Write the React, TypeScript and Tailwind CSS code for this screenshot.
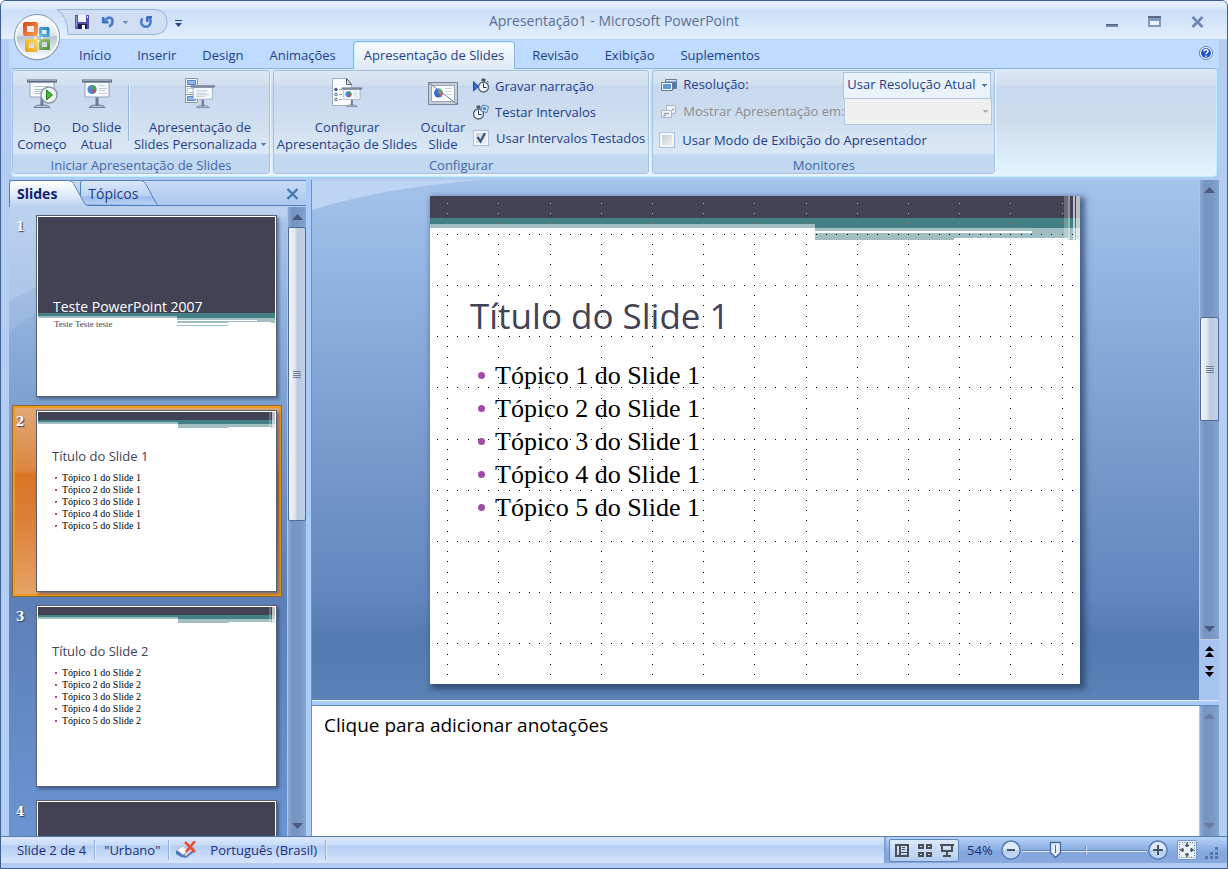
import { useState, type ReactNode } from "react";

const RIBBON_TABS = ["Início", "Inserir", "Design", "Animações", "Apresentação de Slides", "Revisão", "Exibição", "Suplementos"];

const UI_FONT = "font-['Open_Sans','Noto_Sans',sans-serif]";
const TITLE_FONT = "font-['Open_Sans','Noto_Sans',sans-serif]";
const BODY_FONT = "font-['Liberation_Serif',serif]";

type Slide = { title: string; topics: string[]; cover?: boolean };

function topicsFor(slide: number) {
  return [1, 2, 3, 4, 5].map((n) => `Tópico ${n} do Slide ${slide}`);
}

const SLIDES: Slide[] = [
  { title: "Teste PowerPoint 2007", topics: ["Teste Teste teste"], cover: true },
  { title: "Título do Slide 1", topics: topicsFor(1) },
  { title: "Título do Slide 2", topics: topicsFor(2) },
  { title: "", topics: [], cover: true },
];

/* ---------- icons ---------- */

function OfficeLogo() {
  return (
    <svg viewBox="0 0 48 48" className="size-12">
      <defs>
        <linearGradient id="orb" x1="0" y1="0" x2="0" y2="1">
          <stop offset="0" stopColor="#fdfeff" />
          <stop offset="0.45" stopColor="#dfe5ee" />
          <stop offset="0.5" stopColor="#b9c5d6" />
          <stop offset="1" stopColor="#f8fbff" />
        </linearGradient>
        <linearGradient id="red" gradientUnits="userSpaceOnUse" x1="10" y1="9" x2="25" y2="23">
          <stop offset="0" stopColor="#d8401c" />
          <stop offset="1" stopColor="#f6a850" />
        </linearGradient>
        <linearGradient id="blue" gradientUnits="userSpaceOnUse" x1="26" y1="24" x2="36" y2="14">
          <stop offset="0" stopColor="#6cc4ee" />
          <stop offset="1" stopColor="#1f7fc4" />
        </linearGradient>
        <linearGradient id="yellow" gradientUnits="userSpaceOnUse" x1="12" y1="39" x2="25" y2="26">
          <stop offset="0" stopColor="#ee9a10" />
          <stop offset="1" stopColor="#fbe060" />
        </linearGradient>
        <linearGradient id="green" gradientUnits="userSpaceOnUse" x1="25" y1="26" x2="37" y2="38">
          <stop offset="0" stopColor="#a9d472" />
          <stop offset="1" stopColor="#3f8a2c" />
        </linearGradient>
      </defs>
      <circle cx="24" cy="24.5" r="23" fill="#7f93b3" opacity="0.7" />
      <circle cx="24" cy="24" r="22.5" fill="#fff" stroke="#8c98ac" />
      <circle cx="24" cy="24" r="20.5" fill="url(#orb)" />
      <g fill="none" strokeLinejoin="round">
        <rect x="12" y="11" width="11" height="10" stroke="url(#red)" strokeWidth="4" />
        <rect x="27.500" y="15.500" width="7.500" height="7" stroke="url(#blue)" strokeWidth="3" />
        <rect x="14" y="28" width="9" height="9" stroke="url(#yellow)" strokeWidth="4" />
        <rect x="27.500" y="27.500" width="8" height="8" stroke="url(#green)" strokeWidth="3" />
        <path d="M25.500 21v2M25.500 27v2M21.500 25h2M28 25h2" stroke="#fff" strokeWidth="1.500" />
      </g>
    </svg>
  );
}

function SaveIcon() {
  return (
    <svg viewBox="0 0 14 14" className="size-3.5">
      <path d="M0 0h14v14H1l-1-1z" fill="#5350b0" />
      <path d="M3 0h8v7H3z" fill="#eef2ff" />
      <path d="M1 1h1v11H1z" fill="#9a98e0" />
      <path d="M12 1h1v2h-1z" fill="#fff" />
      <path d="M3 9h9v5H3z" fill="#1d1d50" />
      <path d="M7 10h3v4H7z" fill="#fff" />
    </svg>
  );
}

function UndoIcon() {
  return (
    <svg viewBox="0 0 14 14" className="size-3.5" fill="none">
      <path d="M1.500 7.200h6M2.200 8V2" stroke="#3d6fc4" strokeWidth="2.600" />
      <path d="M3 6.500L6 3.500C9 1.500 12 3.500 11.500 7c-.2 2-1.500 3.500-3.500 4.500" stroke="#4a7ccc" strokeWidth="2.600" />
    </svg>
  );
}

function RepeatIcon() {
  return (
    <svg viewBox="0 0 14 14" className="size-3.5" fill="none">
      <path d="M3.500 3.500C1.500 6 2 9 4 10.700c2.200 1.700 5.200 1.200 6.700-1C12 7.500 12 5 10 3" stroke="#4a7ccc" strokeWidth="2.600" />
      <path d="M8 2.200h5M8.200 1.500V7" stroke="#3d6fc4" strokeWidth="2.400" />
    </svg>
  );
}

function HelpIcon() {
  return (
    <svg viewBox="0 0 14 14" className="size-3.5" fill="none">
      <circle cx="7" cy="7" r="6.500" fill="#fff" stroke="#5c7cae" />
      <circle cx="7" cy="7" r="5" fill="#1f56d0" />
      <path d="M5 5.500C5 3 9 3 9 5.300c0 1.500-2 1.400-2 3M7 9.500V11" stroke="#fff" strokeWidth="1.500" />
    </svg>
  );
}

function Caret({ className = "" }: { className?: string }) {
  return (
    <svg viewBox="0 0 5 3" className={`h-[3px] w-[5px] shrink-0 ${className}`} shapeRendering="crispEdges">
      <path d="M0 0h5v1H4v1H3v1H2V2H1V1H0z" fill="currentColor" />
    </svg>
  );
}

function Screen({ chart }: { chart?: boolean }) {
  return (
    <g>
      <path d="M8 29.500c1-2 4-2.500 8-2.500s7 .5 8 2.500z" fill="#b9c8d8" stroke="#6e8194" />
      <path d="M14.500 19h3v9h-3z" fill="#6d7e92" />
      <path d="M4 4h24v15H4z" fill="#f7fafd" stroke="#94a3b5" />
      <path d="M1 1.500h30v3H1z" fill="#5d6d82" />
      <path d="M2 2h28v1H2z" fill="#9aa8ba" />
      {chart ? (
        <g>
          <circle cx="11" cy="11.500" r="4.500" fill="#4a86dc" />
          <path d="M11 11.500V7a4.500 4.500 0 0 1 4.400 5z" fill="#45a548" />
          <path d="M11 11.500l4.400.5a4.500 4.500 0 0 1-3 3.700z" fill="#d8473a" />
          <path d="M18 7.500h6M18 10.500h8M18 12.500h6M18 15.500h8" stroke="#c2cbd6" />
        </g>
      ) : (
        <path d="M8 8.500h14M8 11.500h12M8 13.500h16M8 15.500h10" stroke="#b6c1ce" />
      )}
    </g>
  );
}

function FromStartIcon() {
  return (
    <svg viewBox="0 0 32 32" className="size-8">
      <Screen />
      <circle cx="23" cy="17" r="8" fill="#eef3f6" stroke="#8b98a6" strokeWidth="1.400" />
      <path d="M20.500 12l6 5-6 5z" fill="#4cb63c" stroke="#1f7a1a" />
    </svg>
  );
}

function FromCurrentIcon() {
  return (
    <svg viewBox="0 0 32 32" className="size-8">
      <Screen chart />
    </svg>
  );
}

function CustomShowIcon() {
  return (
    <svg viewBox="0 0 32 32" className="size-8">
      <path d="M1.500.5h12v24h-12z" fill="#f3f6fa" stroke="#8796aa" />
      <path d="M1 8.500h13M1 16.500h13" stroke="#8796aa" />
      <path d="M3.500 2.500h8v4h-8zM3.500 18.500h8v4h-8z" fill="#8fb5ea" stroke="#5585c8" />
      <path d="M3.500 10.500h8v4h-8z" fill="#fff" stroke="#c3ccd8" />
      <g transform="translate(6 6) scale(0.8)">
        <Screen />
      </g>
    </svg>
  );
}

function SetupIcon() {
  return (
    <svg viewBox="0 0 32 32" className="size-8">
      <path d="M1.500.5h14l5 6v21h-19z" fill="#fbfcfe" stroke="#a3b0c2" />
      <path d="M15.500.5v6h5z" fill="#dde5ee" stroke="#4d5a6b" />
      <path d="M8 11.500h3M8 16.500h3M8 21.500h3" stroke="#9aa5b2" />
      <g fill="#fff" stroke="#56647a">
        <circle cx="5" cy="11.500" r="1.300" fill="#3b4960" />
        <circle cx="5" cy="16.500" r="1.300" />
        <circle cx="5" cy="21.500" r="1.300" />
      </g>
      <g transform="translate(10 8.500) scale(0.68)">
        <Screen chart />
      </g>
    </svg>
  );
}

function HideSlideIcon() {
  return (
    <svg viewBox="0 0 32 32" className="size-8">
      <path d="M1.500 4.500h29v22h-29z" fill="#c5cdd8" stroke="#77879b" />
      <path d="M4.500 7.500h23v16h-23z" fill="#fbfcfe" stroke="#98a5b5" />
      <circle cx="11.500" cy="15" r="4.500" fill="#356fcf" />
      <path d="M11.500 15v-4.500a4.500 4.500 0 0 1 4.500 4.500z" fill="#78b878" />
      <path d="M11.500 15h4.500l-2 4z" fill="#d8604a" />
      <path d="M18 10.500h7M18 13.500h7M20 16.500h5" stroke="#ccd4de" />
      <path d="M2 5l28 21" stroke="#6f8095" />
    </svg>
  );
}

function Stopwatch() {
  return (
    <g>
      <path d="M9 1h3v2H9zM14 3l1.500 1.500" fill="#4c5a6e" stroke="#4c5a6e" />
      <circle cx="10.500" cy="9" r="5" fill="#f4f8fc" stroke="#55647a" strokeWidth="1.400" />
      <path d="M10.500 5.500V9.500h3" fill="none" stroke="#1f2c40" />
    </g>
  );
}

function RecordIcon() {
  return (
    <svg viewBox="0 0 16 16" className="size-4">
      <path d="M.5 3.500L5.500 8.500l-5 4.500z" fill="#2f6fd8" stroke="#1c4ea8" />
      <Stopwatch />
    </svg>
  );
}

function RehearseIcon() {
  return (
    <svg viewBox="0 0 16 16" className="size-4">
      <g transform="translate(-5 1)">
        <Stopwatch />
      </g>
      <path d="M9.500 1l6 1.500-1.500 6L8 7z" fill="#eaf3fd" stroke="#4d78b4" />
      <circle cx="11.500" cy="4.800" r="1.800" fill="#2d8fe0" />
    </svg>
  );
}

function MonitorsIcon() {
  return (
    <svg viewBox="0 0 16 16" className="size-4" fill="none">
      <path d="M4.500 2.500h11v9h-11z" fill="#4b78b4" stroke="#697d97" />
      <path d="M5 3h10v1.500H5z" fill="#dbe6f2" />
      <path d="M.5 5.500h11v8H.5z" fill="#fff" stroke="#697d97" />
      <path d="M2 7h8v5H2z" fill="#5a9be0" />
    </svg>
  );
}

function ShowOnIcon() {
  return (
    <svg viewBox="0 0 16 16" className="size-4" fill="none" stroke="#a8b5c6">
      <path d="M5.500 1.500h9v8h-9z" fill="#eef2f7" />
      <path d="M.5 6.500h10v7H.5z" fill="#f4f6fa" />
      <path d="M3 9.500h5M2 11.500h3M11 5.500h2" stroke="#94a2b6" strokeWidth="1.500" />
    </svg>
  );
}

function SpellIcon() {
  return (
    <svg viewBox="0 0 20 18" className="h-[18px] w-5">
      <path d="M0 10l7-4 5 5 6-4v4l-8 6-5-1-5-3z" fill="#4b78c8" />
      <path d="M1 9l6-4 5 5-5 4z" fill="#fbfcfe" stroke="#a6b0bf" strokeWidth="0.700" />
      <path d="M12 10l5-4 1 2-8 7-2-1z" fill="#e6ebf3" stroke="#8894a8" strokeWidth="0.700" />
      <path d="M9 1l10 10M19 0l-9 11" stroke="#f04a2c" strokeWidth="2.600" />
    </svg>
  );
}

/* ---------- ribbon ---------- */

function RibbonGroup({ label, children }: { label: string; children: ReactNode }) {
  return (
    <section
      aria-label={label}
      className="flex flex-col overflow-hidden rounded-[3px] border border-[#a4c1e0] bg-[linear-gradient(#dde8f5_0px,#d1deed_14px,#c8d8ef_15px,#cfdeef_50px,#dbe8f6_84px)] shadow-[1px_1px_0_#f0f7ff]"
    >
      <div className="flex flex-1">{children}</div>
      <div className="h-[19px] bg-[#c1d8f0] text-center leading-[22px] text-[#4368a8]">{label}</div>
    </section>
  );
}

function BigButton({ icon, lines, menu, className }: { icon: ReactNode; lines: [string, string]; menu?: boolean; className: string }) {
  return (
    <button type="button" className={`flex flex-col items-center pt-[7px] leading-[17px] whitespace-nowrap ${className}`}>
      {icon}
      <span className="mt-[9px]">{lines[0]}</span>
      <span className="flex items-center gap-1">
        {lines[1]}
        {menu && <Caret className="text-[#5b84bd]" />}
      </span>
    </button>
  );
}

function CheckRow({ label, checked, onChange }: { label: string; checked: boolean; onChange: (v: boolean) => void }) {
  return (
    <label className="flex items-center gap-[7px] whitespace-nowrap">
      <span className="relative size-4">
        <input
          type="checkbox"
          checked={checked}
          onChange={(e) => onChange(e.target.checked)}
          className="block size-4 appearance-none border border-[#abc1de] bg-[linear-gradient(135deg,#c0c6cf,#f8f8f8)] shadow-[inset_0_0_0_2px_#f4f6fa]"
        />
        {checked && (
          <svg viewBox="0 0 16 16" className="pointer-events-none absolute inset-0 size-4" fill="none">
            <path d="M4.500 7l3 4.500L12 3" stroke="#34557f" strokeWidth="2.200" />
          </svg>
        )}
      </span>
      {label}
    </label>
  );
}

function Ribbon() {
  const [timings, setTimings] = useState(true);
  const [presenter, setPresenter] = useState(false);

  return (
    <div className="mx-[2px] flex h-[109px] gap-[3px] rounded-[4px] border border-t-[#8db2e3] border-r-[#b9f2fb] border-b-[#b9f2fb] border-l-[#b9e2f6] bg-[linear-gradient(#dde8f5_0px,#d1deed_16px,#c8d8ef_17px,#cddcec_50px,#e4f4ff_108px)] pt-px pb-[2px]">
      <RibbonGroup label="Iniciar Apresentação de Slides">
        <BigButton icon={<FromStartIcon />} lines={["Do", "Começo"]} className="w-[58px]" />
        <BigButton icon={<FromCurrentIcon />} lines={["Do Slide", "Atual"]} className="w-[51px]" />
        <div className="mt-3.5 mr-0.5 ml-1.5 h-[56px] w-px bg-[#93b4de] shadow-[1px_0_0_#edf4fc]" />
        <BigButton icon={<CustomShowIcon />} lines={["Apresentação de", "Slides Personalizada"]} menu className="w-[138px]" />
      </RibbonGroup>

      <RibbonGroup label="Configurar">
        <BigButton icon={<SetupIcon />} lines={["Configurar", "Apresentação de Slides"]} className="w-[146px]" />
        <BigButton icon={<HideSlideIcon />} lines={["Ocultar", "Slide"]} className="w-[46px]" />
        <div className="flex flex-col gap-2 pt-1.5 pr-[3px] pl-[7px] leading-[18px]">
          <button type="button" className="flex items-center gap-1.5 whitespace-nowrap">
            <RecordIcon />
            Gravar narração
          </button>
          <button type="button" className="flex items-center gap-1.5 whitespace-nowrap">
            <RehearseIcon />
            Testar Intervalos
          </button>
          <CheckRow label="Usar Intervalos Testados" checked={timings} onChange={setTimings} />
        </div>
      </RibbonGroup>

      <RibbonGroup label="Monitores">
        <div className="w-[341px] pr-[3px] pl-1.5">
          <div className="flex h-[27px] items-center pt-px">
            <label htmlFor="resolution" className="flex flex-1 items-center gap-1.5 pl-0.5">
              <MonitorsIcon />
              Resolução:
            </label>
            <span className="relative">
              <select
                id="resolution"
                className="block h-[27px] w-[148px] appearance-none border border-[#a9c3e3] bg-[#eaf2fb] px-[3px] outline-none"
              >
                <option>Usar Resolução Atual</option>
              </select>
              <Caret className="pointer-events-none absolute top-3 right-1 text-[#4a78b8]" />
            </span>
          </div>
          <div className="flex h-[27px] items-center text-[#8d8d8d]">
            <label htmlFor="show-on" className="flex flex-1 items-center gap-1.5 pl-0.5 whitespace-nowrap">
              <ShowOnIcon />
              Mostrar Apresentação em:
            </label>
            <span className="relative">
              <select id="show-on" disabled className="block h-[27px] w-[148px] appearance-none border border-[#b3c7e1] bg-[#efefef]" />
              <Caret className="pointer-events-none absolute top-3 right-1 text-[#b0b0b0]" />
            </span>
          </div>
          <div className="pt-1.5 leading-[18px]">
            <CheckRow label="Usar Modo de Exibição do Apresentador" checked={presenter} onChange={setPresenter} />
          </div>
        </div>
      </RibbonGroup>
    </div>
  );
}

/* ---------- slides ---------- */

function UrbanBand() {
  return (
    <svg viewBox="0 0 650 44" className="block w-full" shapeRendering="crispEdges" aria-hidden="true">
      <path d="M0 0h650v22H0z" fill="#424255" />
      <path d="M0 22h650v10H0z" fill="#438086" />
      <path d="M0 28h385v4H0z" fill="#a1bfc2" />
      <path d="M385 32h265v12H385z" fill="#a1bfc2" />
      <path d="M385 35h217v2H385zM524 42h114v2H524z" fill="#fff" />
      <path d="M634 0h4v44h-4z" fill="#fff" opacity="0.220" />
      <path d="M638 0h2v44h-2z" fill="#fff" opacity="0.450" />
      <path d="M643 0h2v44h-2zM646 0h4v44h-4z" fill="#fff" opacity="0.650" />
    </svg>
  );
}

function CoverBand() {
  return (
    <svg viewBox="0 0 238 14" className="block w-full" shapeRendering="crispEdges" aria-hidden="true">
      <path d="M0 0h238v5H0z" fill="#438086" />
      <path d="M0 3h140v2H0zM140 5h98v4h-98zM234 9h4v1h-4zM140 9h51v1h-51zM140 12h51v1h-51z" fill="#a1bfc2" />
      <path d="M140 7h80v1h-80z" fill="#fff" />
    </svg>
  );
}

const STEP = 10.24;

function gridDots() {
  const dots: { x: number; y: number }[] = [];
  for (let col = 0; col < 63; col++) {
    for (let row = 0; row < 47; row++) {
      if (col % 5 === 1 || row % 5 === 3) {
        dots.push({ x: Math.round(7 + col * STEP), y: Math.round(7 + row * STEP) });
      }
    }
  }
  return dots;
}

function dotPath(dots: { x: number; y: number }[]) {
  return dots.map((d) => `M${d.x} ${d.y}h1v1h-1z`).join("");
}

function Grid() {
  const dots = gridDots();
  return (
    <svg viewBox="0 0 650 488" className="pointer-events-none absolute inset-0 size-full" shapeRendering="crispEdges" aria-hidden="true">
      <path d={dotPath(dots.filter((d) => d.y < 22))} fill="#bdbdaa" />
      <path d={dotPath(dots.filter((d) => d.y >= 22 && d.y < 32))} fill="#b87a62" />
      <path d={dotPath(dots.filter((d) => d.y >= 32))} fill="#000" />
    </svg>
  );
}

function Thumbnail({ slide, number, selected }: { slide: Slide; number: number; selected: boolean }) {
  return (
    <li
      className={`flex h-[192px] w-[270px] shrink-0 border ${
        selected
          ? "border-[#8a6a3c] bg-[linear-gradient(#e0a878,#dc8640_34%,#d97424_36%,#dc8038_60%,#e6a468)] shadow-[inset_0_0_0_2px_#ee9a1c]"
          : "border-transparent"
      }`}
    >
      <span className="w-[23px] pt-2 pl-[3px] font-['DejaVu_Serif',serif] text-xs leading-4 font-bold text-white [text-shadow:1px_1px_1px_#33415c]">
        {number}
      </span>
      <button
        type="button"
        aria-label={`Slide ${number}`}
        className="mt-1 flex h-[182px] w-[241px] flex-col border border-[#5a6070] bg-white p-px text-left shadow-[2px_2px_3px_rgba(20,40,80,0.5)]"
      >
        {slide.cover ? (
          <span className="block w-full">
            <span className={`flex h-24 w-full items-end bg-[#424255] pl-[15px] text-[14px] leading-3 whitespace-nowrap text-white ${TITLE_FONT}`}>
              {slide.title}
            </span>
            <CoverBand />
            <span className={`-mt-2 block pl-4 text-[9px] leading-[11px] text-[#424255] ${BODY_FONT}`}>{slide.topics[0]}</span>
          </span>
        ) : (
          <span className="block w-full">
            <UrbanBand />
            <span className={`mt-5 block pl-3.5 text-[13px] leading-4 text-[#424255] ${TITLE_FONT}`}>{slide.title}</span>
            <span className={`mt-2 block pl-[17px] text-[10px] text-black ${BODY_FONT}`}>
              {slide.topics.map((topic) => (
                <span key={topic} className="flex items-center gap-[5px] leading-3">
                  <span className="size-0.5 bg-[#a04da3]" />
                  {topic}
                </span>
              ))}
            </span>
          </span>
        )}
      </button>
    </li>
  );
}

/* ---------- scrollbars ---------- */

function ScrollArrow({ down, faded }: { down?: boolean; faded?: boolean }) {
  return (
    <button type="button" aria-label={down ? "Rolar para baixo" : "Rolar para cima"} className="flex h-5 w-full shrink-0 items-center justify-center">
      <svg viewBox="0 0 11 6" className={`h-1.5 w-[11px] ${down ? "rotate-180" : ""}`}>
        <path d="M5.500 0L11 6H0z" fill={faded ? "#6d7ba0" : "#4d5880"} />
      </svg>
    </button>
  );
}

function ScrollThumb({ className }: { className: string }) {
  return (
    <div className={`flex w-full flex-col items-center justify-center gap-px rounded-[2px] border border-[#54699a] bg-[linear-gradient(90deg,#f2f5f9,#e2e7ee_35%,#b9c8de_55%,#c6d3e5)] ${className}`}>
      <i className="h-px w-2 bg-[#6f7f98]" />
      <i className="h-px w-2 bg-[#6f7f98]" />
      <i className="h-px w-2 bg-[#6f7f98]" />
      <i className="h-px w-2 bg-[#6f7f98]" />
    </div>
  );
}

const TRACK = "flex flex-col border-l border-[#a9c6ee] bg-[linear-gradient(90deg,#8fa9cf,#7394c2_25%,#7a99c6_70%,#86a4cf)]";

/* ---------- panes ---------- */

function SlidesPane() {
  return (
    <aside className="flex w-[297px] shrink-0 flex-col">
      <div className="relative flex h-[27px] shrink-0 items-center bg-[linear-gradient(#c9dcf6,#a9c6ee)] text-[14px]">
        <svg viewBox="0 0 297 27" className="absolute inset-0 h-[27px] w-[297px]" aria-hidden="true">
          <defs>
            <linearGradient id="tabOn" x1="0" y1="0" x2="0" y2="1">
              <stop offset="0" stopColor="#fff" />
              <stop offset="0.550" stopColor="#e0ebfa" />
              <stop offset="1" stopColor="#b9d0f1" />
            </linearGradient>
            <linearGradient id="tabOff" x1="0" y1="0" x2="0" y2="1">
              <stop offset="0" stopColor="#dbe8fa" />
              <stop offset="0.600" stopColor="#bcd3f3" />
              <stop offset="0.650" stopColor="#9dbdee" />
              <stop offset="1" stopColor="#b9d3f6" />
            </linearGradient>
          </defs>
          <path d="M0 .5h297" stroke="#5f8fc8" />
          <path d="M71.500 25V3q0-2.500 3-2.500h57q3 0 5 3l12 22z" fill="url(#tabOff)" stroke="#5080b8" />
          <path d="M.5 27V3q0-2.500 3-2.500h56q3 0 5 3l10 18q2 4 4 4H297V27z" fill="url(#tabOn)" />
          <path d="M.5 27V3q0-2.500 3-2.500h56q3 0 5 3l10 18q2 4 4 4H297" fill="none" stroke="#5080b8" />
          <path d="M79 26.500h218" stroke="#b5cdf0" />
        </svg>
        <button type="button" className="relative pl-2 font-bold text-[#0c1e72]">
          Slides
        </button>
        <button type="button" className="relative ml-[31px] text-[#1c3c84]">
          Tópicos
        </button>
        <button type="button" aria-label="Fechar" className="relative mr-[7px] ml-auto">
          <svg viewBox="0 0 13 12" className="h-3 w-[13px]">
            <path d="M1.500 1l10 10M11.500 1l-10 10" stroke="#4678b4" strokeWidth="2.400" />
          </svg>
        </button>
      </div>
      <div className="flex min-h-0 flex-1 bg-[linear-gradient(#a9c5ec,#94b4e0_15%,#7c9fd0_32%,#6c92c6_45%,#5c7fb5_62%,#6a94d2)]">
        <div className="relative flex min-w-0 flex-1 overflow-hidden">
          <svg viewBox="0 0 278 160" className="absolute top-0 left-0 h-40 w-[278px]" aria-hidden="true">
            <path d="M0 0h278v10Q120 30 0 94z" fill="#fff" opacity="0.150" />
            <path d="M0 0h278v14Q110 40 0 126z" fill="#fff" opacity="0.100" />
          </svg>
          <ol className="relative flex min-w-0 flex-1 flex-col gap-[3px] pt-[3px] pl-[3px]">
            {SLIDES.map((slide, index) => (
              <Thumbnail key={index} slide={slide} number={index + 1} selected={index === 1} />
            ))}
          </ol>
        </div>
        <div className={`w-[19px] ${TRACK}`}>
          <ScrollArrow />
          <ScrollThumb className="h-[294px]" />
          <div className="flex-1" />
          <ScrollArrow down />
        </div>
      </div>
    </aside>
  );
}

function Editor() {
  const slide = SLIDES[1];
  return (
    <div className="flex min-h-0 flex-1">
      <div className="relative flex min-w-0 flex-1 items-center justify-center overflow-hidden bg-[linear-gradient(#a3c3ec,#8eafdd_25%,#7698ca_55%,#6286bd_80%,#547bb0_88%,#5a82b6)] pr-px">
        <svg viewBox="0 0 168 30" className="absolute top-0 left-0 h-[30px] w-[168px]" aria-hidden="true">
          <path d="M0 0h168Q70 8 0 30z" fill="#bdd4f2" />
        </svg>
        <article className="relative h-[488px] w-[650px] bg-white shadow-[3px_3px_6px_2px_rgba(30,50,85,0.65)]">
          <UrbanBand />
          <h1 className={`mt-[51px] ml-10 text-[35px] leading-[50px] font-medium text-[#424255] ${TITLE_FONT}`}>{slide.title}</h1>
          <ul className={`mt-[18px] ml-12 text-[26px] text-black ${BODY_FONT}`}>
            {slide.topics.map((topic) => (
              <li key={topic} className="flex items-center leading-[33px]">
                <span className="mr-2.5 size-[7px] rounded-full bg-[#a04da3]" />
                {topic}
              </li>
            ))}
          </ul>
          <Grid />
        </article>
      </div>
      <div className="flex w-5 flex-col bg-[#a6c4ef]">
        <div className={`flex-1 border-b border-b-[#c8ccd4] ${TRACK}`}>
          <ScrollArrow />
          <div className="flex-[118]" />
          <ScrollThumb className="h-[104px]" />
          <div className="flex-[199]" />
          <ScrollArrow down />
        </div>
        <div className="flex h-[60px] flex-col items-center gap-2 pt-[6px]">
          <button type="button" aria-label="Slide anterior" className="flex">
            <svg viewBox="0 0 9 12" className="h-3 w-[9px]">
              <path d="M4.500 0L9 5H0zM4.500 6L9 11H0z" />
            </svg>
          </button>
          <button type="button" aria-label="Próximo slide" className="flex">
            <svg viewBox="0 0 9 12" className="h-3 w-[9px]">
              <path d="M4.500 5L9 0H0zM4.500 11L9 6H0z" />
            </svg>
          </button>
        </div>
      </div>
    </div>
  );
}

function Notes() {
  return (
    <div className="flex h-[130px] shrink-0">
      <textarea
        aria-label="Anotações"
        placeholder="Clique para adicionar anotações"
        className="min-w-0 flex-1 resize-none bg-white px-3 pt-1.5 text-[19px] leading-[26px] text-black outline-none placeholder:text-black placeholder:opacity-100"
      />
      <div className={`w-5 ${TRACK}`}>
        <ScrollArrow faded />
        <div className="flex-1" />
        <ScrollArrow down faded />
      </div>
    </div>
  );
}

/* ---------- window frame ---------- */

function TitleBar() {
  return (
    <header className="relative flex h-[39px] shrink-0 items-center border-b border-[#b3d1f3] bg-[linear-gradient(#e6effc_0px,#dbe8fa_8px,#cadef8_9px,#e4effd_38px)]">
      <div className="relative mt-1 ml-[56px] flex h-[26px] w-[111px] items-center pl-[18px]">
        <svg viewBox="0 0 111 26" className="absolute inset-0 h-[26px] w-[111px]" aria-hidden="true">
          <path d="M0 .5h98q12 1 12 12.500t-12 12.500H11Q11 8 0 .5z" fill="#cfdef2" stroke="#94b3dc" />
        </svg>
        <button type="button" aria-label="Salvar" className="relative">
          <SaveIcon />
        </button>
        <button type="button" aria-label="Desfazer" className="relative ml-3">
          <UndoIcon />
        </button>
        <Caret className="relative ml-2 text-[#6d8fc4]" />
        <button type="button" aria-label="Repetir" className="relative ml-[11px]">
          <RepeatIcon />
        </button>
      </div>
      <button type="button" aria-label="Personalizar barra" className="mt-2 ml-[7px]">
        <svg viewBox="0 0 7 8" className="h-2 w-[7px]" fill="#27458a">
          <path d="M0 0h7v1H0zM0 3h7L3.500 7z" />
        </svg>
      </button>
      <h1 className="pointer-events-none absolute inset-x-0 text-center text-[14px] text-[#5a6f98]">Apresentação1 - Microsoft PowerPoint</h1>
      <div className="mt-1 mr-[23px] ml-auto flex items-center gap-[30px]">
        <button type="button" aria-label="Minimizar" className="pt-2">
          <svg viewBox="0 0 12 4" className="h-1 w-3">
            <path d="M0 0h12v3H0z" fill="#7088b4" />
            <path d="M0 0h12v1H0z" fill="#56637c" />
          </svg>
        </button>
        <button type="button" aria-label="Maximizar">
          <svg viewBox="0 0 13 12" className="h-3 w-[13px]">
            <path d="M0 0h13v11H0z" fill="#7f98c0" />
            <path d="M0 0h13v2H0z" fill="#5c6a85" />
            <path d="M2 5h9v4H2z" fill="#eaf2fc" />
          </svg>
        </button>
        <button type="button" aria-label="Fechar">
          <svg viewBox="0 0 13 12" className="h-3 w-[13px]">
            <path d="M1.500 1l10 10M11.500 1l-10 10" stroke="#7088b4" strokeWidth="2.800" />
          </svg>
        </button>
      </div>
      <button type="button" aria-label="Botão Office" className="absolute top-3 left-3 z-10 size-12">
        <OfficeLogo />
      </button>
    </header>
  );
}

function RibbonTabs() {
  return (
    <nav className="flex h-[28px] shrink-0 items-end bg-[#bfdbff] pl-[57px]">
      {RIBBON_TABS.map((tab) => (
        <button
          key={tab}
          type="button"
          className={
            tab === "Apresentação de Slides"
              ? "relative -mb-px mx-1 h-[28px] rounded-t-[4px] border border-b-0 border-[#8db2e3] bg-[linear-gradient(#f7fbff,#dfe9f6)] px-2.5 shadow-[inset_1px_1px_0_#c6f6ff]"
              : "h-[27px] px-[13px] pt-0.5"
          }
        >
          {tab}
        </button>
      ))}
      <button type="button" aria-label="Ajuda" className="mr-[6px] mb-2 ml-auto">
        <HelpIcon />
      </button>
    </nav>
  );
}

function StatusBar() {
  const [zoom, setZoom] = useState(54);
  const divider = "h-5 w-0.5 border-l border-[#8fb2e2] bg-[#e6f0fc]";

  return (
    <footer className="flex h-[27px] shrink-0 items-center border-t border-[#567db0] bg-[linear-gradient(#dbe8fb_0px,#c7dbf7_8px,#b4cdf3_9px,#d6e6fb_26px)] text-[#1c2f78]">
      <span className="pt-px pr-2 pl-4">Slide 2 de 4</span>
      <i className={divider} />
      <span className="px-2 pt-px">"Urbano"</span>
      <i className={divider} />
      <button type="button" aria-label="Verificação ortográfica" className="px-1.5">
        <SpellIcon />
      </button>
      <span className="px-2 pt-px">Português (Brasil)</span>
      <i className={divider} />

      <div className="ml-auto flex h-full items-center border-l-2 border-[#7ea3d8] bg-[linear-gradient(#b8d2f6,#9bbcec_30%,#83a7dc_60%,#86aade)] pl-[3px]">
        <div className="flex h-[23px] items-center rounded-[2px] border border-[#5f86bf] bg-[linear-gradient(#dce9fb,#b3ccef)] text-[#4c4f55]">
          <button type="button" aria-label="Normal" className="w-[23px]">
            <svg viewBox="0 0 14 13" className="mx-auto h-[13px] w-3.5" shapeRendering="crispEdges">
              <path d="M0 0h14v13H0zM2 2v9h2V2zM6 2v6h6V2zM6 9v2h6V9z" fill="currentColor" fillRule="evenodd" />
              <path d="M7 3h3v1H7zM7 5h3v1H7z" fill="currentColor" />
            </svg>
          </button>
          <button type="button" aria-label="Classificação de slides" className="w-[23px] border-x border-[#c3d8f4]">
            <svg viewBox="0 0 14 13" className="mx-auto h-[13px] w-3.5" shapeRendering="crispEdges">
              <path d="M0 0h6v5H0zM2 2v1h2V2zM8 0h6v5H8zM10 2v1h2V2zM0 8h6v5H0zM2 10v1h2v-1zM8 8h6v5H8zM10 10v1h2v-1z" fill="currentColor" fillRule="evenodd" />
            </svg>
          </button>
          <button type="button" aria-label="Apresentação" className="w-[22px]">
            <svg viewBox="0 0 14 13" className="mx-auto h-[13px] w-3.5" shapeRendering="crispEdges">
              <path d="M0 0h14v2h-1v6H8v3h3v2H3v-2h3V8H1V2H0zM3 2v4h8V2z" fill="currentColor" fillRule="evenodd" />
            </svg>
          </button>
        </div>
        <span className="w-[41px] pt-px pl-2">{zoom}%</span>
        <button type="button" aria-label="Reduzir" onClick={() => setZoom(Math.max(10, zoom - 10))}>
          <svg viewBox="0 0 22 22" className="size-[22px]">
            <circle cx="11" cy="11" r="9" fill="#dfeafa" stroke="#5278b4" strokeWidth="1.500" />
            <path d="M2.500 11h17a8.500 8.500 0 0 1-17 0z" fill="#bcd2f1" />
            <path d="M7 11h8" stroke="#44526c" strokeWidth="2" />
          </svg>
        </button>
        <div className="relative h-[22px] w-[125px]">
          <svg viewBox="0 0 125 22" className="absolute inset-0 h-[22px] w-[125px]" aria-hidden="true">
            <path d="M0 11.500h125M63.500 7v9" stroke="#5f84bd" />
            <path d="M0 12.500h125M64.500 7v9" stroke="#dce9fb" />
            <path d="M28.500 3.500h10v10l-5 5-5-5z" fill="#e6effb" stroke="#4468a4" strokeWidth="1.300" />
            <path d="M33.500 6v8" stroke="#4468a4" />
          </svg>
          <input
            type="range"
            min={10}
            max={400}
            value={zoom}
            aria-label="Zoom"
            onChange={(e) => setZoom(Number(e.target.value))}
            className="absolute inset-0 w-full opacity-0"
          />
        </div>
        <button type="button" aria-label="Ampliar" onClick={() => setZoom(Math.min(400, zoom + 10))}>
          <svg viewBox="0 0 22 22" className="size-[22px]">
            <circle cx="11" cy="11" r="9" fill="#dfeafa" stroke="#5278b4" strokeWidth="1.500" />
            <path d="M2.500 11h17a8.500 8.500 0 0 1-17 0z" fill="#bcd2f1" />
            <path d="M6 11h10M11 6v10" stroke="#44526c" strokeWidth="2" />
          </svg>
        </button>
        <button type="button" aria-label="Ajustar à janela" className="ml-2">
          <svg viewBox="0 0 20 20" className="size-5">
            <rect x="0.500" y="0.500" width="19" height="19" rx="1.500" fill="#e9f1fb" stroke="#7399cf" />
            <path d="M2.500 2.500h15v15h-15z" fill="none" stroke="#6b727c" strokeDasharray="1 1.500" />
            <path d="M10 3v4M8 5.500h4M10 17v-4M8 14.500h4M3 10h4M5.500 8v4M17 10h-4M14.500 8v4" fill="none" stroke="#4f5660" strokeWidth="1.600" />
          </svg>
        </button>
        <svg viewBox="0 0 13 12" className="mr-[9px] mb-1 ml-2 h-3 w-[13px] self-end" fill="#5577ab" aria-hidden="true">
          <path d="M10 0h3v3h-3zM5 5h3v3H5zM10 5h3v3h-3zM0 9h3v3H0zM5 9h3v3H5zM10 9h3v3h-3z" />
        </svg>
      </div>
    </footer>
  );
}

export default function App() {
  return (
    <div className={`flex h-screen min-h-[600px] flex-col overflow-hidden rounded-t-[6px] border border-[#3d5f94] bg-[#b1cbf0] text-[13px] text-[#1e3f8b] ${UI_FONT}`}>
      <TitleBar />
      <div className="flex min-h-0 flex-1 flex-col border-x-[8px] border-[#b4cef3]">
        <RibbonTabs />
        <Ribbon />
        <main className="mt-[3px] flex min-h-0 flex-1">
          <SlidesPane />
          <div className="w-1.5 shrink-0 border-r border-[#6892cc] bg-[#a9ccfb]" />
          <div className="flex min-w-0 flex-1 flex-col">
            <Editor />
            <div className="h-1.5 shrink-0 border-t border-b border-t-[#e6f0fc] border-b-[#5d8ac6] bg-[#a9ccfb]" />
            <Notes />
          </div>
        </main>
      </div>
      <StatusBar />
      <div className="h-[5px] shrink-0 bg-[#b1cbf0]" />
    </div>
  );
}
